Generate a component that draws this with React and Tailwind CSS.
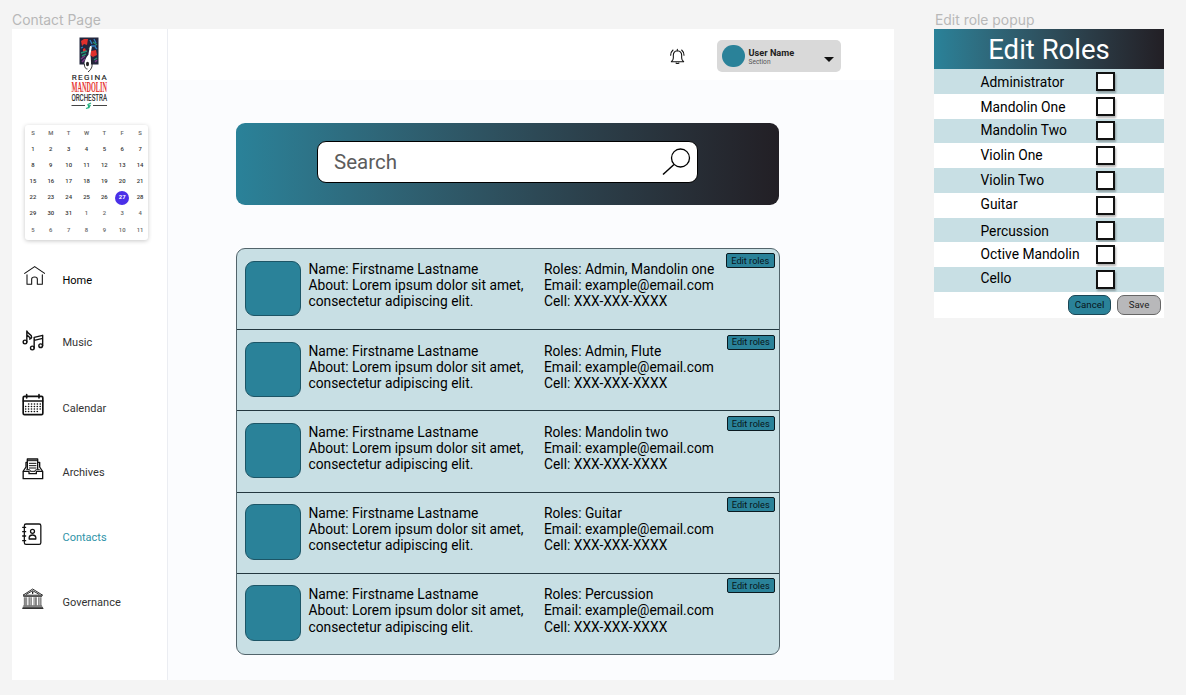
import React from "react";

const Svg = ({ w, h, box, sw = 3, className = "", children }) => (
  <svg
    width={w}
    height={h}
    viewBox={box}
    fill="none"
    stroke="#111"
    strokeWidth={sw}
    strokeLinecap="round"
    strokeLinejoin="round"
    className={"shrink-0 " + className}
  >
    {children}
  </svg>
);

const HomeIcon = () => (
  <Svg w={24} h={24} box="33 27 72 72" sw={3.2}>
    <path d="M44 55 L74 35 L104 55" />
    <path d="M51 59 V88 H65 V72 Q65 66 74 66 Q82 66 82 72 V88 H97 V59" />
  </Svg>
);

const MusicIcon = () => (
  <Svg w={24} h={24} box="33 222 72 72" sw={4.2}>
    <circle cx="45" cy="261" r="5.5" />
    <path d="M50.500 261 V228 C53 238 66 238 65 247 Q64 251 59 252 M51 240 L60 248" />
    <circle cx="67" cy="279" r="5.500" />
    <circle cx="92" cy="272" r="5.500" />
    <path d="M72.500 279 V247 L98 241 V272 M72.500 256 L98 250" />
  </Svg>
);

const CalendarIcon = () => (
  <Svg w={24} h={24} box="33 414 72 72" sw={5}>
    <rect x="39.500" y="424" width="59" height="55" rx="4" />
    <path d="M40 438 H98" strokeWidth="5" />
    <path d="M50 419 V429 M87 419 V429" strokeWidth="5" />
    {[447, 454.5, 462, 469.5].map((y, r) => (
      <path
        key={y}
        d={`M${r === 0 ? 56 : 47} ${y} H${r === 3 ? 83 : 92}`}
        strokeDasharray="0.1 8.6"
        strokeWidth="5"
      />
    ))}
  </Svg>
);

const ArchivesIcon = () => (
  <Svg w={24} h={24} box="33 36 72 72" sw={4}>
    <path d="M39.500 79 H57 V86 H79 V79 H98 V101 H39.500 Z" />
    <path d="M40 78 L48 66 V52 H52 M97 78 L89 66 V52 H85" />
    <path d="M52 71 V42 H83 V71" />
    <path d="M52 47 H83 M58 55 H78 M58 62 H78 M58 69 H78" strokeWidth="3" />
    <path d="M50 74 H58 Q61 74 61 79 H75 Q75 74 79 74 H88" strokeWidth="3" />
  </Svg>
);

const ContactsIcon = () => (
  <Svg w={24} h={24} box="33 231 72 72" sw={3.8}>
    <rect x="43" y="237" width="49.500" height="61" rx="5" />
    <path d="M38 247 H47 M38 260 H47 M38 273 H47 M38 287 H47" />
    <circle cx="67.500" cy="259" r="6" />
    <path d="M57.500 282 V277 Q59 270 67.500 270 Q76 270 77.500 277 V282 Z" />
  </Svg>
);

const GovernanceIcon = () => (
  <Svg w={24} h={24} box="33 427 72 72" sw={2.6}>
    <path d="M40 451 L68 433 L97 451 Z M49 449 L68 438 L87 449" />
    <path d="M68 442 V446" strokeWidth="4" />
    <path d="M41 455 H95" />
    <path d="M43 459 V481 M46 459 V481 M50 459 V481 M57 459 V481 M60 459 V481 M64 459 V481 M72 459 V481 M76 459 V481 M79 459 V481 M86 459 V481 M90 459 V481 M93 459 V481" strokeWidth="1.700" />
    <path d="M41 484 H95 M39 488 H98 M38 491.500 H99" strokeWidth="2.600" />
  </Svg>
);

const BellIcon = () => (
  <Svg w={18} h={18} box="83 82 54 54" sw={3.2}>
    <path d="M93 126 Q99 122 99 115 V107 Q99 94 111 93 Q124 94 124 107 V115 Q124 122 130 126 Z" />
    <path d="M111 92 V89 M107 130 Q111 133 116 130" />
    <path d="M91 107 Q91 97 98 91 M131 107 Q131 97 124 91" />
  </Svg>
);

const Logo = () => (
  <svg width="38" height="73" viewBox="0 0 38 73" className="shrink-0 overflow-visible">
    <rect x="8.500" y="0.500" width="19" height="27" fill="#23263d" />
    <path d="M10 4 L13 2 L17 2 L16 8 L13 7 L11 9 Z M20 14 L25 13 L26 18 L22 20 L19 18 Z M12 12 L14 11 L15 14 L12 15 Z" fill="#e0302c" />
    <path d="M19 3 L21 7 M23 2 L25 6 M20 9 L25 9 M10 11 L12 10 M24 10 L26 12" stroke="#2f7fc0" strokeWidth="1.300" />
    <path d="M10 16 L16 14 M11 19 L15 17 M22 5 L26 8 M18 12 L20 10 M23 23 L26 21" stroke="#269273" strokeWidth="1.400" />
    <path d="M10 22 L14 19 M11 25 L14 22 M24 25 L26 23" stroke="#7d3a86" strokeWidth="1.500" />
    <path d="M19.800 10 L18.500 17" stroke="#fff" strokeWidth="2" strokeLinecap="round" />
    <path d="M18 17 Q13.500 22 13.500 27 Q14 31.500 17 31.500 Q20.500 30 20 25 Q20 20 19 16 Z" fill="#fff" />
    <ellipse cx="16.500" cy="27" rx="1.500" ry="2.200" fill="#222" />
    <path d="M13.300 27 Q13.500 32 16.500 32 M17 35 Q23 31 20.500 23" fill="none" stroke="#222" strokeWidth="0.900" />
    <text x="0.800" y="42.700" fontSize="8" fill="#222" stroke="#222" strokeWidth="0.150" textLength="35" lengthAdjust="spacing">REGINA</text>
    <g transform="translate(0.500 55.400) scale(0.5 1)">
      <text x="0" y="0" fontSize="15" fontWeight="700" fontFamily="Liberation Serif, serif" fill="#e5322d" textLength="71" lengthAdjust="spacingAndGlyphs">MANDOLIN</text>
    </g>
    <g transform="translate(0.500 63.700) scale(0.76 1)">
      <text x="0" y="0" fontSize="8.500" fill="#222" stroke="#222" strokeWidth="0.150" textLength="46.700" lengthAdjust="spacingAndGlyphs">ORCHESTRA</text>
    </g>
    <path d="M0.500 68.500 H14 M22 68.500 H36" stroke="#444" strokeWidth="1" />
    <path d="M15 71.500 L18 70.500 L17 67.500 L20 66 M17 71 L19.500 68" fill="none" stroke="#22b07d" strokeWidth="1.300" />
  </svg>
);

const DAYS = [
  ..."SMTWTFS",
  ...Array.from({ length: 31 }, (_, i) => i + 1),
  ...Array.from({ length: 11 }, (_, i) => i + 1),
];

const dayColor = (i) => (i < 7 || i > 37 ? "text-[#666]" : "text-[#333]");

const MiniCalendar = () => (
  <div className="mt-[15px] ml-[13px] flex h-[115px] w-[123px] shrink-0 justify-center rounded-[3px] bg-white shadow-[0_1px_4px_rgba(0,0,0,0.22)]">
    <div className="grid h-[113px] w-[125px] shrink-0 grid-cols-7 grid-rows-7 pt-[0.5px] text-[5.9px] font-medium">
      {DAYS.map((d, i) => (
        <div key={i} className={"flex items-center justify-center " + dayColor(i)}>
          {i === 33 ? (
            <span className="flex size-[14px] shrink-0 items-center justify-center rounded-full bg-[#4a2fe8] font-bold text-white">
              {d}
            </span>
          ) : (
            d
          )}
        </div>
      ))}
    </div>
  </div>
);

const NAV = [
  { label: "Home", Icon: HomeIcon, cls: "h-[65px]", text: "pt-[9px] text-black" },
  { label: "Music", Icon: MusicIcon, cls: "h-[64px]", text: "pt-[6px] text-[#333]" },
  { label: "Calendar", Icon: CalendarIcon, cls: "h-[64px]", text: "pt-[8px] text-[#333]" },
  { label: "Archives", Icon: ArchivesIcon, cls: "h-[65px]", text: "pt-[8px] text-[#333]" },
  { label: "Contacts", Icon: ContactsIcon, cls: "h-[65px]", text: "pt-[8px] text-[#2e93a8]" },
  { label: "Governance", Icon: GovernanceIcon, cls: "h-[65px]", text: "pt-[8px] text-[#333]" },
];

const Sidebar = () => (
  <aside className="flex w-[156px] shrink-0 flex-col border-r border-[#ebedf2] bg-white">
    <div className="flex h-[81px] shrink-0 items-end pl-[59px]">
      <Logo />
    </div>
    <MiniCalendar />
    <nav className="mt-[24px] flex flex-col pl-[9px]">
      {NAV.map(({ label, Icon, cls, text }) => (
        <a key={label} className={"flex items-start " + cls}>
          <span className="flex h-6 w-[41.5px] items-center">
            <Icon />
          </span>
          <span className={"flex items-center text-[11px] leading-[16px] " + text}>{label}</span>
        </a>
      ))}
    </nav>
  </aside>
);

const TopBar = () => (
  <header className="flex h-[51px] shrink-0 items-start bg-white pt-[11px] pl-[500px]">
    <div className="flex h-[32px] w-[49px] items-center">
      <BellIcon />
    </div>
    <div className="flex h-[32px] w-[124px] items-center rounded-[5px] bg-[#d9d9d9] pl-[5px]">
      <div className="size-[22.5px] rounded-full bg-[#2a8299]" />
      <div className="ml-[4px] flex flex-1 flex-col">
        <span className="text-[9.2px] leading-[11px] font-bold text-[#222]">User Name</span>
        <span className="text-[6.6px] leading-[8px] text-[#555]">Section</span>
      </div>
      <svg width="10" height="5" viewBox="0 0 9 5" preserveAspectRatio="none" className="mt-[7px] mr-[7px]">
        <path d="M0 0 H9 L4.500 5 Z" fill="#111" />
      </svg>
    </div>
  </header>
);

const SearchBanner = () => (
  <div className="mt-[43px] flex h-[82px] w-[543px] shrink-0 items-center justify-center rounded-[9px] bg-linear-to-r from-[#2a8299] to-[#221f25]">
    <div className="mb-[4px] flex h-[42px] w-[381px] items-center justify-between rounded-[9px] border border-black bg-white pr-[6px] pl-[16px]">
      <span className="text-[20.5px] text-[#5c5c5c]">Search</span>
      <svg width="29" height="28" viewBox="0 0 29 28" fill="none" stroke="#000" strokeWidth="1.300">
        <circle cx="18.500" cy="10" r="9" />
        <path d="M12 16.500 L1 26.500" strokeWidth="1.500" />
      </svg>
    </div>
  </div>
);

const ROLES = ["Admin, Mandolin one", "Admin, Flute", "Mandolin two", "Guitar", "Percussion"];

const ContactRow = ({ roles, first }) => (
  <li
    className={
      "flex min-h-0 flex-1 items-start border-[#23373f] pl-[8px] text-[13.8px] leading-[16.2px] text-black " +
      (first ? "" : "border-t")
    }
  >
    <div className="mt-[11.5px] size-[55.5px] shrink-0 rounded-[9px] border border-[#1c5566] bg-[#2a8299]" />
    <div className={"ml-[8px] w-[235.5px] shrink-0 whitespace-nowrap " + (first ? "mt-[11.5px]" : "mt-[12.3px]")}>
      <p>Name: Firstname Lastname</p>
      <p>About: Lorem ipsum dolor sit amet,</p>
      <p>consectetur adipiscing elit.</p>
    </div>
    <div className={"shrink-0 whitespace-nowrap " + (first ? "mt-[11.5px] w-[182px]" : "mt-[12.3px] w-[182.5px]")}>
      <p>Roles: {roles}</p>
      <p>Email: example@email.com</p>
      <p>Cell: XXX-XXX-XXXX</p>
    </div>
    <button className="mt-[4.3px] flex h-[15px] w-[48.5px] shrink-0 items-center justify-center rounded-[2px] border border-[#0a1a20] bg-[#2a8299] text-[9.2px] leading-none whitespace-nowrap text-[#08151a]">
      Edit roles
    </button>
  </li>
);

const ContactPage = () => (
  <section className="flex w-[882px] shrink-0 flex-col">
    <h2 className="h-[18px] font-[Inter] text-[13.9px] leading-[18px] text-[#b8b8b8]">Contact Page</h2>
    <div className="flex h-[651px]">
      <Sidebar />
      <main className="flex flex-1 flex-col bg-[#fbfcfe]">
        <TopBar />
        <div className="flex flex-col pl-[68px]">
          <SearchBanner />
          <ul className="mt-[43px] flex h-[407px] w-[544px] flex-col rounded-[9px] border border-[#52646b] bg-[#c8dfe4]">
            {ROLES.map((r, i) => (
              <ContactRow key={r} roles={r} first={i === 0} />
            ))}
          </ul>
        </div>
      </main>
    </div>
  </section>
);

const POPUP_ROLES = [
  ["Administrator", "pt-[1px]"],
  ["Mandolin One", "pt-[1px]"],
  ["Mandolin Two", "pb-[2px]"],
  ["Violin One", "pb-[2px]"],
  ["Violin Two", "pb-[2px]"],
  ["Guitar", "pb-[3px]"],
  ["Percussion", "pt-[1px]"],
  ["Octive Mandolin", "pb-[2px]"],
  ["Cello", "pb-[3px]"],
];

const EditRolePopup = () => (
  <section className="ml-[40px] flex w-[230px] shrink-0 flex-col">
    <h2 className="h-[18px] pl-[1px] font-[Inter] text-[13.9px] leading-[18px] whitespace-nowrap text-[#b8b8b8]">Edit role popup</h2>
    <div className="flex h-[289px] flex-col bg-white">
      <div className="flex h-[40px] shrink-0 items-center justify-center bg-linear-to-r from-[#2a8299] to-[#221f25] text-[27.5px] text-white">
        <span className="pt-[1px]">Edit Roles</span>
      </div>
      <ul className="flex h-[223px] shrink-0 flex-col">
        {POPUP_ROLES.map(([name, pad], i) => (
          <li key={name} className={"flex flex-1 items-center pl-[46.5px] " + (i % 2 ? "bg-white" : "bg-[#c8dfe4]")}>
            <span className={"w-[115px] text-[13.8px] leading-4 whitespace-nowrap text-black " + pad}>{name}</span>
            <span className="size-[19px] shrink-0 border-2 border-[#111] bg-white shadow-[1px_2px_2px_rgba(0,0,0,0.3)]" />
          </li>
        ))}
      </ul>
      <div className="flex flex-1 items-start justify-end gap-[6px] pt-[3px] pr-[3px] text-[9.7px]">
        <button className="flex h-[20px] w-[43px] items-center justify-center rounded-[7px] border border-[#1b4655] bg-[#2a8299] text-[#08151a]">
          Cancel
        </button>
        <button className="flex h-[20px] w-[44px] items-center justify-center rounded-[7px] border border-[#666] bg-[#b8b8ba] text-[#222]">
          Save
        </button>
      </div>
    </div>
  </section>
);

export default function App() {
  return (
    <div className="flex h-[695px] w-[1186px] items-start overflow-hidden bg-[#f4f4f4] pt-[11px] pl-[12px] font-[Roboto,sans-serif]">
      <ContactPage />
      <EditRolePopup />
    </div>
  );
}
